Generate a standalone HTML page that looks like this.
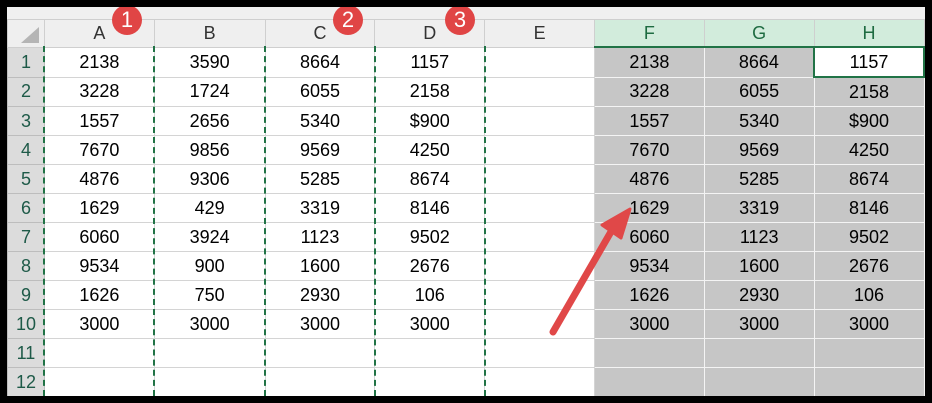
<!DOCTYPE html><html><head><style>
body{margin:0;width:932px;height:403px;background:#000;overflow:hidden;font-family:"Liberation Sans",Calibri,sans-serif;position:relative}
#s{position:absolute;left:7px;top:7px;width:918px;height:389px;background:#fff;overflow:hidden}
.top{position:absolute;left:0;top:0;width:918px;height:12px;background:#f0f0f0}
table{position:absolute;left:0;top:12px;border-collapse:collapse;table-layout:fixed}
td{border:1px solid #d4d4d4;height:28px;padding:0;text-align:center;font-size:18px;color:#000}
tr.h td{height:26px;background:#efefef;color:#333;font-size:18px;border-color:#cfcfcf}
tr.h td.g{background:#d2ecdc;color:#1e6b41;border-bottom:2px solid #217346}
td.rh{background:#dcdcdc;color:#1e5a48;font-size:18px;border-color:#bdbdbd}
td.sel{background:#c6c6c6;border:1px solid #f4f4f4}
td.act{background:#fff;border:2px solid #217346}
.d{position:absolute;top:39px;height:350px;border-left:2px dashed #217346}
.c{position:absolute;top:-2px;width:30px;height:30px;border-radius:50%;background:#e04545;color:#fff;font-size:22px;text-align:center;line-height:30px}
</style></head><body><div id="s">
<div class="top"></div>
<table>
<colgroup><col style="width:37px"><col style="width:110px"><col style="width:111px"><col style="width:110px"><col style="width:110px"><col style="width:110px"><col style="width:110px"><col style="width:110px"><col style="width:110px"></colgroup>
<tr class="h"><td style="position:relative"><svg width="24" height="20" style="position:absolute;right:3px;bottom:2px"><polygon points="22,2 22,18 4,18" fill="#b5b5b5"/></svg></td><td>A</td><td>B</td><td>C</td><td>D</td><td>E</td><td class="g">F</td><td class="g">G</td><td class="g">H</td></tr>
<tr><td class="rh">1</td><td>2138</td><td>3590</td><td>8664</td><td>1157</td><td></td><td class="sel">2138</td><td class="sel">8664</td><td class="act">1157</td></tr>
<tr><td class="rh">2</td><td>3228</td><td>1724</td><td>6055</td><td>2158</td><td></td><td class="sel">3228</td><td class="sel">6055</td><td class="sel">2158</td></tr>
<tr><td class="rh">3</td><td>1557</td><td>2656</td><td>5340</td><td>$900</td><td></td><td class="sel">1557</td><td class="sel">5340</td><td class="sel">$900</td></tr>
<tr><td class="rh">4</td><td>7670</td><td>9856</td><td>9569</td><td>4250</td><td></td><td class="sel">7670</td><td class="sel">9569</td><td class="sel">4250</td></tr>
<tr><td class="rh">5</td><td>4876</td><td>9306</td><td>5285</td><td>8674</td><td></td><td class="sel">4876</td><td class="sel">5285</td><td class="sel">8674</td></tr>
<tr><td class="rh">6</td><td>1629</td><td>429</td><td>3319</td><td>8146</td><td></td><td class="sel">1629</td><td class="sel">3319</td><td class="sel">8146</td></tr>
<tr><td class="rh">7</td><td>6060</td><td>3924</td><td>1123</td><td>9502</td><td></td><td class="sel">6060</td><td class="sel">1123</td><td class="sel">9502</td></tr>
<tr><td class="rh">8</td><td>9534</td><td>900</td><td>1600</td><td>2676</td><td></td><td class="sel">9534</td><td class="sel">1600</td><td class="sel">2676</td></tr>
<tr><td class="rh">9</td><td>1626</td><td>750</td><td>2930</td><td>106</td><td></td><td class="sel">1626</td><td class="sel">2930</td><td class="sel">106</td></tr>
<tr><td class="rh">10</td><td>3000</td><td>3000</td><td>3000</td><td>3000</td><td></td><td class="sel">3000</td><td class="sel">3000</td><td class="sel">3000</td></tr>
<tr><td class="rh">11</td><td></td><td></td><td></td><td></td><td></td><td class="sel"></td><td class="sel"></td><td class="sel"></td></tr>
<tr><td class="rh">12</td><td></td><td></td><td></td><td></td><td></td><td class="sel"></td><td class="sel"></td><td class="sel"></td></tr>
</table>
<div class="d" style="left:36px"></div><div class="d" style="left:146px"></div><div class="d" style="left:257px"></div><div class="d" style="left:367px"></div><div class="d" style="left:477px"></div>
<div class="c" style="left:105px">1</div><div class="c" style="left:326px">2</div><div class="c" style="left:438px">3</div>
</div>
<svg width="932" height="403" style="position:absolute;left:0;top:0">
<line x1="553" y1="332" x2="612" y2="230" stroke="#e04848" stroke-width="7" stroke-linecap="round"/>
<polygon points="630,209 602,225 621,238" fill="#e04848" stroke="#e04848" stroke-width="3" stroke-linejoin="round"/>
</svg>
</body></html>
